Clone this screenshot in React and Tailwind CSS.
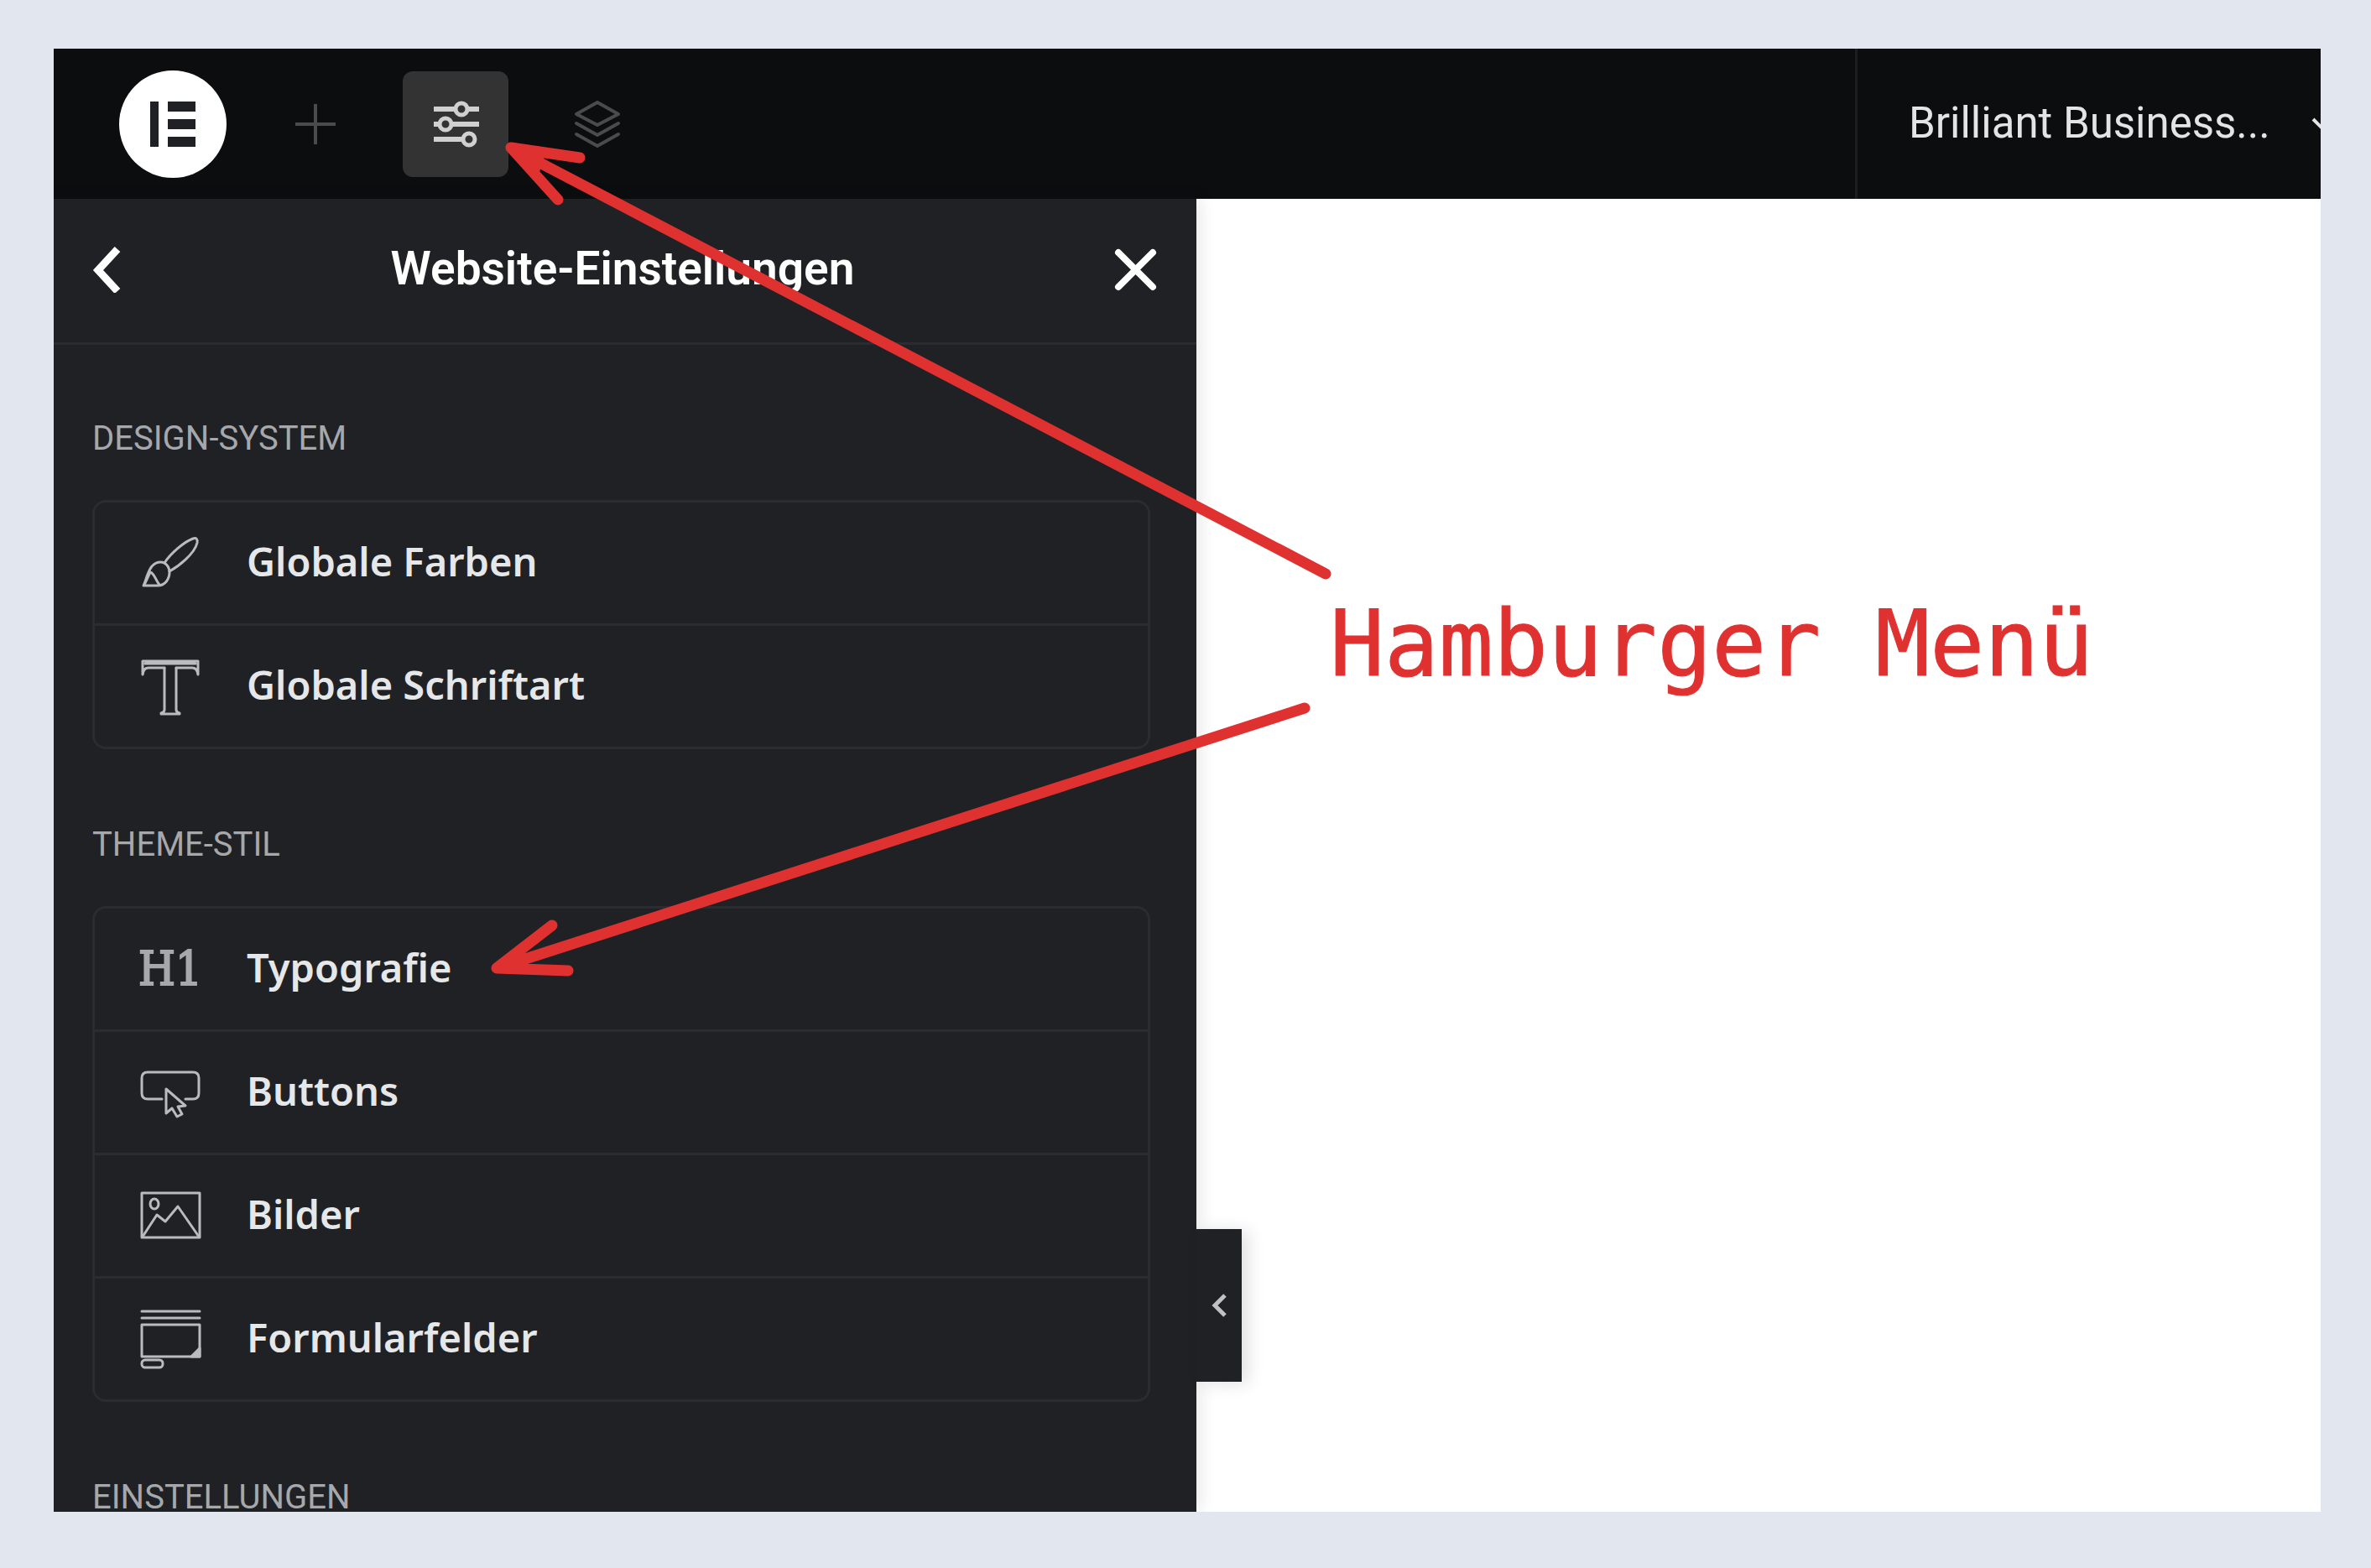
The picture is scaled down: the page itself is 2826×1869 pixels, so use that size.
import React from "react";

const Svg = ({ children, ...props }) => (
  <svg
    width="76"
    height="76"
    viewBox="0 0 76 76"
    fill="none"
    stroke="#b9bbbf"
    strokeWidth="3"
    strokeLinejoin="round"
    strokeLinecap="round"
    aria-hidden="true"
    {...props}
  >
    {children}
  </svg>
);

const BrushIcon = () => (
  <Svg>
    <path d="M31 38 C38 27 54 13 65 9 Q71 7 70 14 C67 27 48 42 37 48" />
    <path d="M31 38 Q37 42 37 49 C37 57 32 65 23 65 L6 65 C9 60 10 50 16 42 Q23 35 31 38 Z" />
    <path d="M14 49 C19 50 20 58 25 64 M14 49 L7 64" />
  </Svg>
);

const TypeIcon = () => (
  <Svg>
    <path d="M5 8 H71 V24 M5 8 V24 M5 24 Q6 16 12 16 H31 M71 24 Q70 16 64 16 H45 M8 11 H68" />
    <path d="M31 16 V66 Q31 69 27 70 V71 H49 V70 Q45 69 45 66 V16" />
  </Svg>
);

const HeadingIcon = () => (
  <span
    aria-hidden="true"
    className="flex w-[76px] justify-center font-['DejaVu_Serif_Condensed','DejaVu_Serif',serif] text-[56px] leading-none font-normal text-[#a6a8ac] [-webkit-text-stroke:2px_#a6a8ac]"
  >
    H1
  </span>
);

const ButtonIcon = () => (
  <Svg>
    <path d="M28 46 H11 Q4 46 4 39 V21 Q4 14 11 14 H65 Q72 14 72 21 V39 Q72 46 65 46 H56" />
    <path d="M33 34 V63 L40 57 L46 67 L52 64 L47 55 L56 54 Z" />
  </Svg>
);

const ImageIcon = () => (
  <Svg>
    <rect x="4" y="11" width="69" height="53" />
    <ellipse cx="19" cy="24" rx="5" ry="6" />
    <path d="M5 63 L22 37 L32 45 L47 27 L72 63" />
  </Svg>
);

const FormIcon = () => (
  <Svg>
    <path d="M4 5 H73 M4 13 H73" />
    <rect x="4" y="21" width="69" height="38" />
    <path d="M73 49 V59 H63 Z" fill="#b9bbbf" />
    <rect x="4" y="63" width="25" height="9" rx="4" />
  </Svg>
);

const sections = [
  {
    title: "DESIGN-SYSTEM",
    items: [
      ["Globale Farben", BrushIcon],
      ["Globale Schriftart", TypeIcon],
    ],
  },
  {
    title: "THEME-STIL",
    items: [
      ["Typografie", HeadingIcon],
      ["Buttons", ButtonIcon],
      ["Bilder", ImageIcon],
      ["Formularfelder", FormIcon],
    ],
  },
  { title: "EINSTELLUNGEN", items: [] },
];

function TopBar() {
  return (
    <header className="flex h-[179px] shrink-0 items-stretch bg-[#0c0d0e]">
      <div className="flex items-center pl-[78px]">
        <button aria-label="Elementor" className="flex size-32 items-center justify-center rounded-full bg-white">
          <svg width="56" height="54" viewBox="0 0 56 54" fill="#1f2124" aria-hidden="true">
            <rect width="10" height="54" x="1" />
            <rect x="22" width="33" height="12" />
            <rect x="22" y="21" width="33" height="12" />
            <rect x="22" y="42" width="33" height="12" />
          </svg>
        </button>
        <button aria-label="Element hinzufügen" className="ml-[43px] flex size-[126px] items-center justify-center">
          <svg width="48" height="48" viewBox="0 0 48 48" stroke="#4a4b4d" strokeWidth="4" aria-hidden="true">
            <path d="M24 0 V48 M0 24 H48" />
          </svg>
        </button>
        <button
          aria-label="Website-Einstellungen"
          className="ml-[41px] flex size-[126px] items-center justify-center rounded-xl bg-[#333333]"
        >
          <svg width="56" height="56" viewBox="0 0 56 56" fill="none" stroke="#d0d0d0" strokeWidth="6" aria-hidden="true">
            <path d="M2 10 H27 M42 10 H56 M2 28 H9 M24 28 H56 M2 46 H36" />
            <g strokeWidth="5">
              <circle cx="35" cy="10" r="7" />
              <circle cx="16" cy="28" r="7" />
              <circle cx="44" cy="46" r="7" />
            </g>
          </svg>
        </button>
        <button aria-label="Struktur" className="ml-[43px] flex size-[126px] items-center justify-center">
          <svg
            width="56"
            height="58"
            viewBox="0 0 56 58"
            fill="none"
            stroke="#4a4b4d"
            strokeWidth="4"
            strokeLinejoin="round"
            strokeLinecap="round"
            aria-hidden="true"
          >
            <path d="M28 3 L53 17 L28 30 L3 17 Z M3 28 L28 42 L53 28 M3 41 L28 55 L53 41" />
          </svg>
        </button>
      </div>
      <button className="ml-auto flex w-[555px] items-center gap-[48px] overflow-hidden border-l-3 border-[#1d1e20] pl-[61px] font-[Roboto,sans-serif] text-[51px] whitespace-nowrap text-[#e3e4e6]">
        <span>Brilliant Business...</span>
        <svg
          className="shrink-0"
          width="28"
          height="18"
          viewBox="0 0 28 18"
          fill="none"
          stroke="#e3e4e6"
          strokeWidth="4"
          aria-hidden="true"
        >
          <path d="M3 3 L14 14 L25 3" />
        </svg>
      </button>
    </header>
  );
}

function Section({ title, items }) {
  return (
    <section>
      <h2 className="font-[Roboto,sans-serif] text-[40px] leading-[36px] text-[#a6a8ac]">{title}</h2>
      {items.length > 0 && (
        <ul className="mt-[55px] divide-y-3 divide-[#2b2c30] rounded-2xl border-3 border-[#2b2c30]">
          {items.map(([label, Icon]) => (
            <li key={label}>
              <button className="flex h-36 w-full items-center gap-[53px] pl-[52px] text-left font-['Noto_Sans',sans-serif] text-[47px] font-semibold text-[#e6e7e9]">
                <Icon />
                <span className="pb-1">{label}</span>
              </button>
            </li>
          ))}
        </ul>
      )}
    </section>
  );
}

function Sidebar() {
  return (
    <aside className="relative w-[1362px] shrink-0 bg-[#1f2124] shadow-[4px_0_20px_rgba(0,0,0,0.1)]">
      <div className="flex h-[174px] items-center justify-between border-b-3 border-[#2b2c30] px-[46px] pb-1">
        <button aria-label="Zurück">
          <svg width="48" height="56" viewBox="0 0 48 56" fill="none" stroke="#fff" strokeWidth="9" aria-hidden="true">
            <path d="M30 4 L7 29 L30 54" />
          </svg>
        </button>
        <h1 className="font-[Roboto,sans-serif] text-[55px] font-semibold text-white">Website-Einstellungen</h1>
        <button aria-label="Schließen">
          <svg
            width="54"
            height="54"
            viewBox="0 0 54 54"
            stroke="#fff"
            strokeWidth="8"
            strokeLinecap="round"
            aria-hidden="true"
          >
            <path d="M7 7 L48 48 M48 7 L7 48" />
          </svg>
        </button>
      </div>
      <div className="flex flex-col gap-24 pt-[94px] pr-[55px] pl-[46px]">
        {sections.map((s) => (
          <Section key={s.title} {...s} />
        ))}
      </div>
      <button
        aria-label="Panel einklappen"
        className="absolute top-[1228px] left-full flex h-[182px] w-[54px] items-center justify-center bg-[#1f2124] shadow-[8px_2px_20px_rgba(0,0,0,0.12)]"
      >
        <svg width="20" height="30" viewBox="0 0 20 30" fill="none" stroke="#bfc1c4" strokeWidth="5" aria-hidden="true">
          <path d="M17 3 L5 15 L17 27" />
        </svg>
      </button>
    </aside>
  );
}

function Annotations() {
  return (
    <div className="pointer-events-none absolute inset-0">
      <svg
        className="absolute top-0 left-0"
        width="1560"
        height="1140"
        viewBox="64 58 1560 1140"
        fill="none"
        stroke="#e03131"
        strokeWidth="13"
        strokeLinecap="round"
        strokeLinejoin="round"
        aria-hidden="true"
      >
        <path d="M1580 684 Q1100 434 609 176 M691 188 L609 176 L665 238" />
        <path d="M609 176 L650 184 L640 214 Z" fill="#e03131" stroke="none" />
        <path d="M1555 844 L592 1154 M658 1103 L592 1154 L677 1157" />
        <path d="M592 1154 L622 1132 L632 1155 Z" fill="#e03131" stroke="none" />
      </svg>
      <p className="absolute top-[646px] left-[1521px] font-['DejaVu_Sans_Mono',monospace] text-[108px] leading-[128px] whitespace-nowrap text-[#e03131] [-webkit-text-stroke:1px_#e03131]">
        Hamburger Menü
      </p>
    </div>
  );
}

export default function App() {
  return (
    <div className="flex h-screen flex-col bg-[#e2e6ee] pt-[58px] pr-[60px] pb-[67px] pl-16">
      <div className="relative flex min-h-0 flex-1 flex-col overflow-hidden bg-white">
        <TopBar />
        <div className="flex min-h-0 flex-1">
          <Sidebar />
          <main className="flex-1" />
        </div>
        <Annotations />
      </div>
    </div>
  );
}
